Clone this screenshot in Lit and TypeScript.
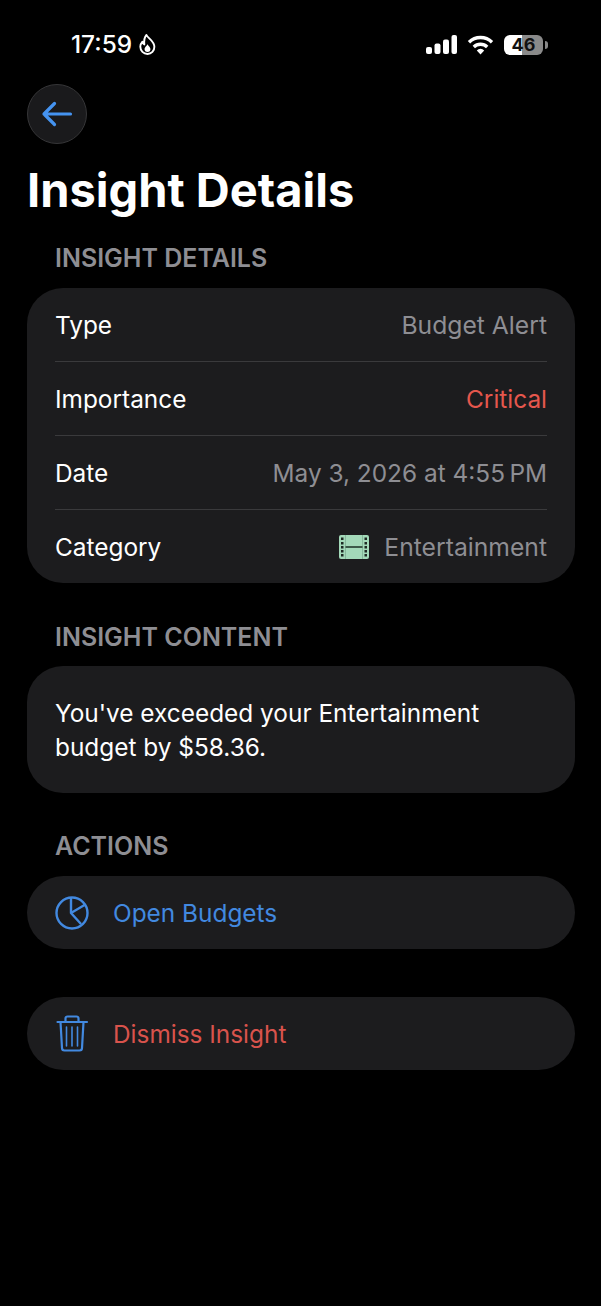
import { LitElement, html, css } from "lit";
import { customElement } from "lit/decorators.js";

@customElement("app-root")
export class AppRoot extends LitElement {
  static styles = css`
    :host { display: block; width: 601px; height: 1306px; background: #000; color: #fff; font-family: Inter, "Liberation Sans", sans-serif; overflow: hidden; }
    .status { height: 84px; box-sizing: border-box; padding: 30px 58px 0 71px; display: flex; justify-content: space-between; align-items: flex-start; }
    .time { display: flex; align-items: center; gap: 6px; font-size: 24.4px; font-weight: 500; line-height: 29px; }
    .sys { display: flex; align-items: center; gap: 10px; height: 29px; }
    .batt { position: relative; width: 39px; height: 20px; border-radius: 6px; background: linear-gradient(90deg, #fff 0 46%, #8a8a8a 46%); color: #111; font-size: 18px; font-weight: 700; display: flex; align-items: center; justify-content: center; line-height: 20px; }
    .batt::after { content: ""; position: absolute; right: -5px; top: 6px; width: 3px; height: 8px; border-radius: 0 3px 3px 0; background: #8a8a8a; }
    .content { padding: 0 26px 0 27px; }
    .back { width: 60px; height: 60px; box-sizing: border-box; border-radius: 50%; background: #1a1a1c; border: 1px solid #363638; display: flex; align-items: center; justify-content: center; }
    h1 { margin: 13px 0 0; font-size: 47px; line-height: 66px; font-weight: 700; }
    .label { margin: 0 0 14px 28px; font-size: 25px; line-height: 30px; font-weight: 600; color: #8e8e93; }
    .label.first { margin-top: 20px; margin-bottom: 15px; }
    .label.last { margin-bottom: 15px; }
    .card { background: #1c1c1e; border-radius: 36px; }
    .row { height: 74px; margin: 0 28px; display: flex; align-items: center; justify-content: space-between; font-size: 24.4px; box-sizing: border-box; border-bottom: 1px solid #3a3a3c; }
    .row:last-child { border-bottom: 0; height: 73px; }
    .val { color: #8e8e93; display: flex; align-items: center; gap: 15px; }
    .wide { font-size: 24.7px; }
    .crit { color: #e5574d; }
    .msg { padding: 30px 28px 29px; font-size: 24.4px; line-height: 34px; margin-bottom: 38px; }
    .gap { margin-bottom: 39px; }
    .action { height: 73px; padding-left: 28px; display: flex; align-items: center; gap: 24px; font-size: 24.4px; border-radius: 37px; }
    .action svg { flex: none; }
    .blue { color: #4289e0; }
    .red { color: #d9534c; }
    .spaced { margin-top: 48px; }
  `;

  render() {
    return html`
      <div class="status">
        <div class="time">17:59
          <svg width="19" height="23" viewBox="0 0 18 21" fill="none" stroke="#fff" stroke-width="1.800" stroke-linejoin="round"><path d="M8 1.500c1 2.800 7.500 5.500 7.500 11.200A6.600 6.600 0 0 1 9 19.500a6.800 6.800 0 0 1-6.800-6.800c0-2 .9-3.600 2-4.800.3 1.200.9 2 1.800 2.500C5.600 6.800 6.200 3.500 8 1.500Z"/><path d="M9 17.500a2.800 2.800 0 0 1-2.800-2.800c0-1.500 1.600-2.500 2.800-4.500 1.200 2 2.800 3 2.800 4.500A2.800 2.800 0 0 1 9 17.500Z" fill="#fff" stroke="none"/></svg>
        </div>
        <div class="sys">
          <svg width="31" height="19" viewBox="0 0 31 19" fill="#fff"><rect x="0" y="12" width="6" height="7" rx="2"/><rect x="8.500" y="8.500" width="6" height="10.500" rx="2"/><rect x="17" y="4.500" width="6" height="14.500" rx="2"/><rect x="25.500" y="0" width="5.500" height="19" rx="2"/></svg>
          <svg width="27" height="20" viewBox="0 0 27 20" fill="none" stroke="#fff" stroke-width="3.400"><path d="M2 7.200a16.500 16.500 0 0 1 23 0"/><path d="M6.800 12a9.700 9.700 0 0 1 13.400 0"/><path d="M13.500 19.500 9.800 15.500a5 5 0 0 1 7.400 0Z" fill="#fff" stroke="none"/></svg>
          <div class="batt">46</div>
        </div>
      </div>
      <div class="content">
        <div class="back">
          <svg width="32" height="26" viewBox="0 0 32 26" fill="none" stroke="#4593f0" stroke-width="3.200" stroke-linecap="round" stroke-linejoin="round"><path d="M29.500 13H3M13.500 2.500 3 13l10.500 10.500"/></svg>
        </div>
        <h1>Insight Details</h1>
        <div class="label first">INSIGHT DETAILS</div>
        <div class="card gap">
          <div class="row"><span>Type</span><span class="val wide">Budget Alert</span></div>
          <div class="row"><span>Importance</span><span class="val crit">Critical</span></div>
          <div class="row"><span>Date</span><span class="val">May 3, 2026 at 4:55\u2009PM</span></div>
          <div class="row"><span>Category</span><span class="val wide">
            <svg width="30" height="24" viewBox="0 0 30 24"><rect width="30" height="24" rx="2" fill="#a3d9b9"/><path d="M6.500 0v24M23.500 0v24" stroke="#86b79b" stroke-width="1"/><path d="M6.500 12h17" stroke="#24392d" stroke-width="1.600"/><g fill="#1e2a24"><rect x="2" y="2.500" width="2.500" height="2.500"/><rect x="2" y="7" width="2.500" height="2.500"/><rect x="2" y="11" width="2.500" height="2.500"/><rect x="2" y="15" width="2.500" height="2.500"/><rect x="2" y="19" width="2.500" height="2.500"/><rect x="25.500" y="2.500" width="2.500" height="2.500"/><rect x="25.500" y="7" width="2.500" height="2.500"/><rect x="25.500" y="11" width="2.500" height="2.500"/><rect x="25.500" y="15" width="2.500" height="2.500"/><rect x="25.500" y="19" width="2.500" height="2.500"/></g></svg>
            Entertainment</span></div>
        </div>
        <div class="label">INSIGHT CONTENT</div>
        <div class="card msg">You've exceeded your Entertainment budget by $58.36.</div>
        <div class="label last">ACTIONS</div>
        <div class="card action blue">
          <svg width="34" height="34" viewBox="0 0 34 34" fill="none" stroke="#4289e0" stroke-width="2.400" stroke-linejoin="round"><circle cx="17" cy="17" r="15.500"/><path d="M16 1.500V17l10 11M16 17l13.500-8"/></svg>
          Open Budgets
        </div>
        <div class="card action red spaced">
          <svg width="34" height="37" viewBox="0 0 34 37" fill="none" stroke="#4289e0" stroke-width="2.200" stroke-linecap="round" stroke-linejoin="round"><path d="M2.500 7h29.500M10.500 7V3.500A2 2 0 0 1 12.500 1.500h9a2 2 0 0 1 2 2V7M5.500 7l1.500 26a2.500 2.500 0 0 0 2.500 2.500h15a2.500 2.500 0 0 0 2.500-2.500L28.500 7"/><path d="M11.500 12v19M17 12v19M22.500 12v19" stroke-width="1.600"/></svg>
          Dismiss Insight
        </div>
      </div>
    `;
  }
}
